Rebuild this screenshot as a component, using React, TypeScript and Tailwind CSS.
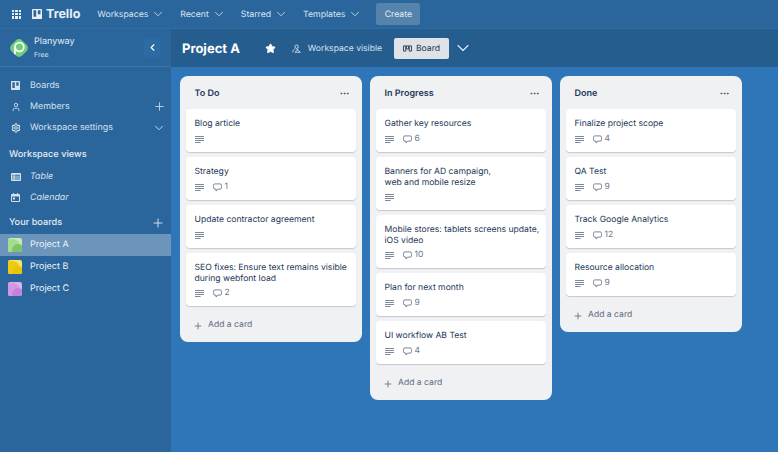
import { FC, ReactNode } from "react";
import { ChevronDown, ChevronLeft, Plus, User, Settings, Star, Ellipsis } from "lucide-react";

const BoardsIcon: FC<{ className?: string }> = ({ className }) => (
  <svg viewBox="0 0 12 12" className={className}>
    <path
      fillRule="evenodd"
      fill="currentColor"
      d="M1 0h10a1 1 0 0 1 1 1v10a1 1 0 0 1-1 1H1a1 1 0 0 1-1-1V1a1 1 0 0 1 1-1zm.8 1.6v7.6h3.2V1.6zm5.2 0v4.6h3.2V1.6z"
    />
  </svg>
);

const DescIcon = () => (
  <svg viewBox="0 0 9 7" className="h-[7px] w-[9px] shrink-0 text-[#7d8899]">
    <path fill="currentColor" d="M0 0h9v1.1H0zM0 2h9v1.1H0zM0 4h9v1.1H0zM0 6h5.5v1H0z" />
  </svg>
);

const CommentIcon = () => (
  <svg viewBox="0 0 10 10" className="h-[9px] w-[9px] text-[#5e6c84]" fill="none" stroke="currentColor" strokeWidth="0.9">
    <path d="M2.2 1h5.6A1.7 1.7 0 0 1 9.5 2.7v2.4a1.7 1.7 0 0 1-1.7 1.7H5.2L3.4 8.9V6.8H2.2A1.7 1.7 0 0 1 .5 5.1V2.7A1.7 1.7 0 0 1 2.2 1z" />
  </svg>
);

const TableIcon = () => (
  <svg viewBox="0 0 10 8" className="h-[8px] w-[10px]">
    <path
      fillRule="evenodd"
      fill="currentColor"
      d="M1 0h8a1 1 0 0 1 1 1v6a1 1 0 0 1-1 1H1a1 1 0 0 1-1-1V1a1 1 0 0 1 1-1zm0 1.8v1h1.6v-1zm2.6 0v1H9v-1zM1 3.6v1h1.6v-1zm2.6 0v1H9v-1zM1 5.4v1h1.6v-1zm2.6 0v1H9v-1z"
    />
  </svg>
);

const CalendarIcon = () => (
  <svg viewBox="0 0 9 9" className="h-[9px] w-[9px]">
    <path
      fillRule="evenodd"
      fill="currentColor"
      d="M2 0h1v1h3V0h1v1h1a1 1 0 0 1 1 1v6a1 1 0 0 1-1 1H1a1 1 0 0 1-1-1V2a1 1 0 0 1 1-1h1zM1 3.4V8h7V3.4zM2 4.6h2v1.8H2z"
    />
  </svg>
);

const VisibleIcon = () => (
  <svg viewBox="0 0 10 10" className="h-[9px] w-[9px] text-[#e4ecf4]" fill="none" stroke="currentColor" strokeWidth="0.9">
    <circle cx="5.2" cy="3" r="1.9" />
    <path d="M.8 9.2c.1-2 1.2-3.4 2.8-3.8M5 5.6l4.2 3.6H3.4L7 5.4" />
  </svg>
);

const BoardGlyph = () => (
  <svg viewBox="0 0 10 7" className="h-[7px] w-[9px] text-[#253858]" fill="none" stroke="currentColor" strokeWidth="1">
    <path d="M.6.6h2.5v5.8H.6zM3.8.6h2.4v3.4H3.8zM6.9.6h2.5v5.8H6.9z" />
  </svg>
);

const Logo = () => (
  <svg viewBox="0 0 22 22" className="h-[22px] w-[22px] shrink-0">
    <rect x="3.4" y="3.4" width="15.2" height="15.2" rx="4.5" transform="rotate(45 11 11)" fill="#6fce7c" />
    <circle cx="11.4" cy="10" r="4.4" fill="none" stroke="#fff" strokeWidth="1.7" />
    <path d="M7 10v6.5" stroke="#fff" strokeWidth="1.7" strokeLinecap="round" />
  </svg>
);

const Thumb: FC<{ base: string; light: string; dark: string }> = ({ base, light, dark }) => (
  <svg viewBox="0 0 14 14" className="h-[14px] w-[14px] shrink-0 rounded-[2px]">
    <rect width="14" height="14" fill={light} />
    <circle cx="4" cy="9" r="8" fill={base} />
    <circle cx="10" cy="12" r="6" fill={dark} />
  </svg>
);

const NavItem: FC<{ label: string }> = ({ label }) => (
  <div className="flex items-center gap-[3px] text-[8.7px] text-[#d9e5f0]">
    <span className="pt-[4px]">{label}</span>
    <ChevronDown className="h-[14px] w-[14px]" strokeWidth={1.4} />
  </div>
);

const SideRow: FC<{ icon: ReactNode; label: string; right?: ReactNode; italic?: boolean }> = ({
  icon,
  label,
  right,
  italic,
}) => (
  <div className="flex h-[21px] items-center pl-[11px] pr-[5px] text-[#d5e2ee]">
    <span className="flex w-[19px] shrink-0">{icon}</span>
    <span className={`text-[8.9px] ${italic ? "italic" : ""}`}>{label}</span>
    <span className="ml-auto">{right}</span>
  </div>
);

const BoardRow: FC<{ label: string; thumb: ReactNode; active?: boolean }> = ({ label, thumb, active }) => (
  <div className={`flex h-[22px] items-center gap-[8px] pl-[8px] text-[9px] text-[#eef3f8] ${active ? "bg-[#6b95bb]" : ""}`}>
    {thumb}
    {label}
  </div>
);

interface CardData {
  title: string[];
  comments?: number;
}

const Card: FC<{ card: CardData }> = ({ card }) => (
  <div className="rounded-[4px] bg-white pb-[8px] pl-[8.5px] pr-[9px] pt-[10px] shadow-[0_1px_1px_#c5c9d0]">
    <div className="flex flex-col">
      {card.title.map((line, i) => (
        <div
          key={line}
          className={`whitespace-nowrap text-[8.6px] leading-[11px] text-[#253858] ${i === 0 ? "h-[11px]" : "h-[10px]"}`}
        >
          {line}
        </div>
      ))}
    </div>
    <div className="mt-[4px] flex h-[10px] items-center text-[8.5px] text-[#6b778c]">
      <DescIcon />
      {card.comments !== undefined && (
        <span className="ml-[9px] flex items-center gap-[3px]">
          <CommentIcon />
          {card.comments}
        </span>
      )}
    </div>
  </div>
);

const List: FC<{ title: string; cards: CardData[] }> = ({ title, cards }) => (
  <div className="flex w-[182px] shrink-0 flex-col rounded-[8px] bg-[#f0f1f3] px-[6px]">
    <div className="flex h-[33px] items-center pl-[8.5px] pr-[6px] pt-[2px] text-[9px] font-semibold text-[#253858]">
      {title}
      <Ellipsis className="ml-auto h-[11px] w-[11px] text-[#42526e]" />
    </div>
    <div className="flex flex-col gap-[5px]">
      {cards.map((card) => (
        <Card key={card.title[0]} card={card} />
      ))}
    </div>
    <div className="flex h-[36px] items-center gap-[5px] pl-[7px] pt-[3px] text-[8.6px] text-[#5e6c84]">
      <Plus className="h-[10px] w-[10px]" />
      Add a card
    </div>
  </div>
);

const lists: { title: string; cards: CardData[] }[] = [
  {
    title: "To Do",
    cards: [
      { title: ["Blog article"] },
      { title: ["Strategy"], comments: 1 },
      { title: ["Update contractor agreement"] },
      { title: ["SEO fixes: Ensure text remains visible", "during webfont load"], comments: 2 },
    ],
  },
  {
    title: "In Progress",
    cards: [
      { title: ["Gather key resources"], comments: 6 },
      { title: ["Banners for AD campaign,", "web and mobile resize"] },
      { title: ["Mobile stores: tablets screens update,", "iOS video"], comments: 10 },
      { title: ["Plan for next month"], comments: 9 },
      { title: ["UI workflow AB Test"], comments: 4 },
    ],
  },
  {
    title: "Done",
    cards: [
      { title: ["Finalize project scope"], comments: 4 },
      { title: ["QA Test"], comments: 9 },
      { title: ["Track Google Analytics"], comments: 12 },
      { title: ["Resource allocation"], comments: 9 },
    ],
  },
];

export default function App() {
  return (
    <div className="flex h-[452px] w-[778px] flex-col overflow-hidden bg-[#2f76b9] font-['Inter',sans-serif] [text-rendering:geometricPrecision]">
      <header className="flex h-[29px] shrink-0 items-center gap-[15px] border-b border-[#2f6c9f] bg-[#2a669c] pl-[12px]">
        <div className="grid h-[9px] w-[9px] grid-cols-3 gap-[1px]">
          {Array.from({ length: 9 }).map((_, i) => (
            <span key={i} className="bg-[#e8eff6]" />
          ))}
        </div>
        <div className="-ml-[4px] mr-[2px] flex items-center gap-[4px] text-[12.5px] font-bold leading-none text-[#e8eff6]">
          <BoardsIcon className="h-[10px] w-[10px]" />
          <span className="pt-[2px]">Trello</span>
        </div>
        <NavItem label="Workspaces" />
        <NavItem label="Recent" />
        <NavItem label="Starred" />
        <NavItem label="Templates" />
        <div className="-ml-[1px] flex h-[22px] w-[44px] items-center justify-center rounded-[2px] bg-[#5583ac] pt-[4px] text-[8.7px] text-[#e4ecf4]">
          Create
        </div>
      </header>
      <div className="flex min-h-0 flex-1">
        <aside className="w-[171px] shrink-0 bg-[#2a669c] text-[#e4ecf4]">
          <div className="flex h-[38px] items-center border-b border-[#3d76a7] pl-[8px] pr-[11px]">
            <Logo />
            <div className="ml-[4px] flex flex-col">
              <span className="text-[9px] leading-[13px] text-[#e4ecf4]">Planyway</span>
              <span className="text-[7px] leading-[13px] text-[#d5e2ee]">Free</span>
            </div>
            <div className="ml-auto flex h-[20px] w-[16px] items-center justify-center rounded-[2px] bg-[#2d6ba2]">
              <ChevronLeft className="h-[11px] w-[11px] text-white" strokeWidth={2.5} />
            </div>
          </div>
          <div className="pt-[8px]">
            <SideRow icon={<BoardsIcon className="h-[9px] w-[9px]" />} label="Boards" />
            <SideRow
              icon={<User className="h-[10px] w-[10px]" />}
              label="Members"
              right={<Plus className="h-[13px] w-[13px]" strokeWidth={1.5} />}
            />
            <SideRow
              icon={<Settings className="h-[10px] w-[10px]" strokeWidth={2.5} />}
              label="Workspace settings"
              right={<ChevronDown className="h-[14px] w-[14px]" strokeWidth={1.5} />}
            />
          </div>
          <div className="pl-[9px] pt-[10px] text-[9.2px] font-medium leading-[14px] text-[#e4ecf4]">Workspace views</div>
          <div className="pt-[4px]">
            <SideRow icon={<TableIcon />} label="Table" italic />
            <SideRow icon={<CalendarIcon />} label="Calendar" italic />
          </div>
          <div className="flex items-center pl-[9px] pr-[6px] pt-[8px] text-[9.2px] font-medium leading-[14px] text-[#e4ecf4]">
            Your boards
            <Plus className="ml-auto h-[14px] w-[14px]" strokeWidth={1.5} />
          </div>
          <div className="pt-[4px]">
            <BoardRow label="Project A" thumb={<Thumb base="#a5db8f" light="#c5e8b5" dark="#7cc66a" />} active />
            <BoardRow label="Project B" thumb={<Thumb base="#eccb12" light="#f7e46c" dark="#e8c40c" />} />
            <BoardRow label="Project C" thumb={<Thumb base="#cf97e4" light="#dcb0ec" dark="#c283dd" />} />
          </div>
        </aside>
        <main className="flex min-w-0 flex-1 flex-col">
          <div className="flex h-[38px] shrink-0 items-center bg-[#265d8f] pl-[11px] text-white">
            <span className="pt-[3px] text-[13px] font-bold">Project A</span>
            <Star className="ml-[25px] h-[11px] w-[11px]" fill="currentColor" />
            <span className="ml-[16px]">
              <VisibleIcon />
            </span>
            <span className="ml-[7px] pt-[2px] text-[8.6px] text-[#d5e2ee]">Workspace visible</span>
            <div className="ml-[12px] flex h-[21px] w-[55px] items-center justify-center gap-[4px] rounded-[2px] bg-[#dfe2e7] text-[8.7px] text-[#253858]">
              <BoardGlyph />
              <span className="pt-[3px]">Board</span>
            </div>
            <ChevronDown className="ml-[4px] h-[20px] w-[20px] text-[#e4ecf4]" strokeWidth={1.3} />
          </div>
          <div className="flex items-start gap-[8px] pl-[9px] pt-[9px]">
            {lists.map((list) => (
              <List key={list.title} title={list.title} cards={list.cards} />
            ))}
          </div>
        </main>
      </div>
    </div>
  );
}
